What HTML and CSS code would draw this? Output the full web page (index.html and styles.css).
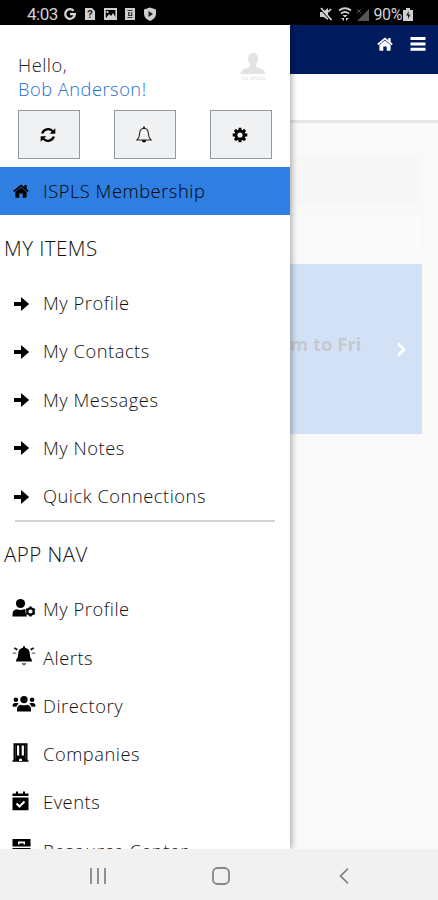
FILE: index.html
```html
<!DOCTYPE html>
<html lang="en">
<head>
<meta charset="utf-8">
<title>ISPLS Membership</title>
<link rel="stylesheet" href="styles.css">
</head>
<body>
<svg class="defs" width="0" height="0">
  <symbol id="home" viewBox="0 0 16 14"><path d="M8 3.4 13.6 8v5.1q0 .7-.7.7H9.7V9.5H6.3v4.3H3.1q-.7 0-.7-.7V8z"/><path d="M.8 7.5 8 1.5l7.200 6" fill="none" stroke="currentColor" stroke-width="1.700"/><path d="M11.300.9h2.300v4.700l-2.300-1.900z"/></symbol>
  <symbol id="arrow" viewBox="0 0 15 14"><path d="M0 5h7V.6q0-.7.6-.2l7 6.100q.5.5 0 1l-7 6.100q-.6.5-.6-.2V9H0z"/></symbol>
</svg>
<div class="phone">
  <header class="status">
    <span class="clock">4:03</span>
    <svg class="status-left" width="96" height="16" viewBox="0 0 96 16">
      <path d="M10.600 4.800A4.800 4.800 0 1 0 11.800 8.200H7" fill="none" stroke="#d8d8d8" stroke-width="2.300"/>
      <path d="M22 2h7l3 3v9H22z"/><text x="24.200" y="12" class="query">?</text>
      <path fill-rule="evenodd" d="M41 2h13v12H41zm1.800 2v8h9.500V4z"/><path d="m43 12 3-4 2 2 2-3 3 5zM43.500 5h2v2h-2z"/>
      <path d="M62 2h10v12H62z"/><path d="M64.500 4.500h5M64.500 11.500h5M68.800 6.300v3.200h-3.200V6.800h1.700" fill="none" stroke="#333" stroke-width="1.200"/>
      <path d="m87 1.500 6 2v4q0 5-6 7.500-6-2.500-6-7.500v-4z"/><path d="M85.500 5v6l4.500-3z" fill="#222"/>
    </svg>
    <svg class="status-right" width="50" height="15" viewBox="0 0 50 15">
      <path d="M1 5h3l5-4v12L4.500 10H1z"/><path d="m1 1 11 12" stroke="#000" stroke-width="2"/><path d="m2 1 10.500 12M9 5l3-3" stroke="#ddd" stroke-width="1.700"/>
      <path d="M20 3.500q6-4.500 12 0M22 6.500q4-3 8 0" fill="none" stroke="#ccc" stroke-width="1.900"/><path d="M23.500 8h5L26 10.500zM22 11h3v3zm8 0h-3v3z"/>
      <path d="M38 14 50 2v12z" fill="#555"/><path d="m38 2 4 4m0-4-4 4" stroke="#555"/>
    </svg>
    <span class="percent">90%</span>
    <svg width="10" height="13" viewBox="0 0 10 13"><path d="M0 2h3V0h4v2h3v11H0z"/><path d="M5.800 3 3 7.500h2V11l2.500-4.500h-2z" fill="#222"/></svg>
  </header>

  <div class="screen">
    <main class="page">
      <div class="topbar">
        <svg width="16" height="14"><use href="#home"/></svg>
        <svg width="16" height="14" viewBox="0 0 16 14"><path d="M.5 0h15v3H.5zm0 5.400h15v3H.5zm0 5.400h15v3H.5z"/></svg>
      </div>
      <div class="subbar"></div>
      <div class="content">
        <div class="ghost dark"></div>
        <div class="ghost light"></div>
        <div class="banner">
          <span>m to Fri</span>
          <svg width="11" height="15" viewBox="0 0 11 15"><path d="m2 1.500 6 6-6 6" fill="none" stroke="#fff" stroke-width="2.800"/></svg>
        </div>
      </div>
    </main>

    <aside class="drawer">
      <div class="user">
        <div class="greeting"><div class="hello">Hello,</div><div class="name">Bob Anderson!</div></div>
        <div class="avatar">
          <svg width="26" height="21" viewBox="0 0 26 21"><path d="M13 0q5 0 5 6 0 3-2 5.500v2q2 1.500 6 2.500 3 1 3.500 5H.5q.5-4 3.500-5 4-1 6-2.500v-2Q8 9 8 6q0-6 5-6z"/></svg>
          <span>no photo</span>
        </div>
      </div>
      <div class="actions">
        <div class="button"><svg width="16" height="16" viewBox="0 0 16 16"><path d="M2.200 6.600A6 5.600 0 0 1 12.600 4.200M13.800 9.400A6 5.600 0 0 1 3.400 11.800" fill="none" stroke="#000" stroke-width="2.300"/><path d="M15.300 1.200v5.600H9.700zM.700 14.800V9.200h5.600z"/></svg></div>
        <div class="button"><svg width="16" height="18" viewBox="0 0 16 18"><path d="M8 2.200q-4 .3-4.300 4.800-.1 4.500-2.700 7h14q-2.600-2.500-2.700-7Q12 2.500 8 2.200z" fill="none" stroke="#222" stroke-width="1.100"/><path d="M7.200.5h1.600v2H7.200zM5.800 14.200h4.400q-.2 2.300-2.200 2.300t-2.200-2.300z"/></svg></div>
        <div class="button"><svg width="16" height="16" viewBox="-8 -8 16 16"><circle r="4.100" fill="none" stroke="#000" stroke-width="3"/><path d="M0-7.300V-4M0 7.300V4M-7.300 0H-4M7.300 0H4M-5.100-5.100-3-3M5.100 5.100 3 3M-5.100 5.100-3 3M5.100-5.100 3-3" stroke="#000" stroke-width="2.900"/></svg></div>
      </div>
      <div class="current"><svg width="16" height="14"><use href="#home"/></svg><span>ISPLS Membership</span></div>

      <h2>MY ITEMS</h2>
      <ul class="items">
        <li><svg width="15" height="14"><use href="#arrow"/></svg><span>My Profile</span></li>
        <li><svg width="15" height="14"><use href="#arrow"/></svg><span>My Contacts</span></li>
        <li><svg width="15" height="14"><use href="#arrow"/></svg><span>My Messages</span></li>
        <li><svg width="15" height="14"><use href="#arrow"/></svg><span>My Notes</span></li>
        <li><svg width="15" height="14"><use href="#arrow"/></svg><span>Quick Connections</span></li>
      </ul>
      <hr>
      <h2 class="nav-title">APP NAV</h2>
      <ul class="nav">
        <li><svg width="24" height="20" viewBox="0 0 24 20"><circle cx="8.500" cy="5.500" r="4.600"/><path d="M.5 18.500v-2q0-5 4.500-5.200 3.500 1.400 7 0l1.700.3q-.7 2.400.3 4.400l1 2.500z"/><circle cx="18.500" cy="13.500" r="3.200" fill="none" stroke="#000" stroke-width="2.200"/><path d="M18.500 8.500v2M18.500 16.500v2M14.200 11l1.700 1M21.100 15l1.700 1M14.200 16l1.700-1M21.100 12l1.700-1" stroke="#000" stroke-width="2.200"/></svg><span>My Profile</span></li>
        <li><svg width="24" height="20" viewBox="0 0 24 20"><path d="M11 .3h2v1.500q4.500.8 4.700 5.200.1 4 1.600 6 .7.900.7 2.500H4q0-1.600.7-2.500 1.500-2 1.600-6Q6.500 2.600 11 1.800z"/><path d="M9.500 17h5q-1 2.500-2.500 2.500T9.500 17z" fill="#777"/><path d="m2.300 2 3.100 1.800M21.700 2l-3.100 1.800" stroke="#000" stroke-width="1.600"/><path d="M.7 7.300h3.600M23.300 7.300h-3.600" stroke="#888" stroke-width="1.500"/></svg><span>Alerts</span></li>
        <li><svg width="24" height="20" viewBox="0 0 24 20"><circle cx="12" cy="5.600" r="3.700"/><circle cx="3.900" cy="5.700" r="2.300"/><circle cx="20.100" cy="5.700" r="2.300"/><path d="M5 17.500v-2.300q0-3.800 4-4.500 3 1 6 0 4 .7 4 4.500v2.300zM.5 12.500Q.500 9 3 9h2.500l1.400.8Q4.800 11 4.400 12.800zM23.500 12.500Q23.500 9 21 9h-2.500l-1.400.8q2.100 1.200 2.500 3z"/></svg><span>Directory</span></li>
        <li><svg width="24" height="20" viewBox="0 0 24 20"><path fill-rule="evenodd" d="M1.500.2h14v17H16.500v1.600H.5v-1.600h1zM5 2.500v10h2.200v-10zm4.700 0v10h2.200v-10zM7 18v-1.500q1.500-2 3 0V18z"/><path d="M3.300 2v14M13.700 2v14" stroke="#666" stroke-width=".6"/></svg><span>Companies</span></li>
        <li><svg width="24" height="20" viewBox="0 0 24 20"><path d="M.5 5V2.500H4V.5h2v2h5v-2h2v2h3.500V5zM.5 6.500h16v12.700H.5z"/><path d="m4.500 12.500 3 3 5-5" fill="none" stroke="#fff" stroke-width="2"/></svg><span>Events</span></li>
        <li><svg width="24" height="20" viewBox="0 0 24 20"><path fill-rule="evenodd" d="M.5 0h18v7.500H.5zm5.500 2.500v3h1.500V4.300h4v1.200H13v-3zM.5 9h18v8H.500z"/></svg><span>Resource Center</span></li>
      </ul>
    </aside>
  </div>

  <footer class="softkeys">
    <svg width="16" height="16" viewBox="0 0 16 16"><path d="M1 0v16M8 0v16M15 0v16"/></svg>
    <svg class="home-key" width="18" height="18" viewBox="0 0 18 18"><rect x="1" y="1" width="16" height="16" rx="4.500"/></svg>
    <svg width="10" height="16" viewBox="0 0 10 16"><path d="M9 .7 1.500 8 9 15.300"/></svg>
  </footer>
</div>
</body>
</html>
```
FILE: styles.css
```css
* { box-sizing: border-box; }
body { margin: 0; font-family: "Open Sans", "Noto Sans", sans-serif; }
svg { display: block; flex: none; }
.defs { position: absolute; }
.phone { width: 438px; height: 900px; display: flex; flex-direction: column; overflow: hidden; }

.status { height: 25px; flex: none; background: #000; color: #d2d2d2; fill: #d0d0d0; display: flex; align-items: center; padding: 3px 25px 0 27px; font: 17px Roboto, sans-serif; }
.clock { width: 36px; letter-spacing: -0.5px; }
.query { font: bold 11px Roboto, sans-serif; fill: #222; }
.status-right { margin-left: auto; }
.percent { font-size: 16px; margin: 0 1px 0 4px; letter-spacing: -0.4px; }

.screen { height: 824px; flex: none; display: grid; grid-template-columns: 290px 148px; overflow: hidden; position: relative; }
.page { grid-column: 2; grid-row: 1; background: #f9f9f9; min-width: 0; }
.topbar { height: 49px; background: #001c5e; color: #fff; fill: #fff; display: flex; justify-content: flex-end; gap: 17px; padding: 12px 12px 0 0; }
.subbar { height: 49px; background: #fff; border-bottom: 3px solid #e6e6e6; }
.content { padding: 34px 16px 0 0; }
.ghost.dark { height: 48px; background: #f7f7f7; margin-bottom: 10px; }
.ghost.light { height: 40px; background: #fafafa; border: 1px solid #f7f7f7; margin-bottom: 9px; }
.banner { height: 170px; background: #d2e1f5; display: flex; align-items: center; padding-right: 15px; justify-content: space-between; color: #c5c9d0; font-size: 18.500px; font-weight: 700; }
.banner span { padding-bottom: 12px; }

.drawer { grid-column: 1; grid-row: 1; height: 824px; overflow: hidden; background: #fff; color: #111; box-shadow: 1px 0 7px rgba(0, 0, 0, 0.38); z-index: 1; font-weight: 330; font-size: 18.300px; letter-spacing: 0.540px; }
.user { height: 85px; display: flex; justify-content: space-between; padding: 28px 23px 0 18px; line-height: 24px; }
.greeting { letter-spacing: 0.500px; }
.hello { color: #222; }
.name { color: #1f6fd4; }
.avatar { width: 27px; fill: #e3e3e3; color: #ccc; font-size: 6px; line-height: 8px; text-align: center; white-space: nowrap; letter-spacing: 0; }
.actions { display: flex; justify-content: space-between; padding: 0 18px; height: 57px; }
.button { width: 62px; height: 49px; background: #f0f1f2; border: 1px solid #949b9f; display: flex; align-items: center; justify-content: center; }
.button svg { margin-right: 2px; }
.current { height: 48px; background: #2f7fe3; color: #000; display: flex; align-items: center; padding-left: 13px; }
.current span { margin-left: 14px; padding-bottom: 2px; }
h2 { margin: 0; height: 64px; padding: 20px 0 0 4px; font-size: 20.500px; line-height: 26px; font-weight: 330; letter-spacing: 0.450px; }
ul { list-style: none; margin: 0; padding: 0; }
li { height: 48.250px; display: flex; align-items: center; padding-left: 14px; white-space: nowrap; }
li span { margin-left: 14px; padding-bottom: 1.200px; }
.items svg { margin-top: 1px; }
hr { border: 0; height: 2px; background: #d2d2d2; margin: 0 15px; }
.nav-title { height: 63px; padding-top: 19px; }
.nav li { padding-left: 12px; }
.nav li svg { margin-bottom: 3px; }
.nav li span { margin-left: 7px; }

.softkeys { height: 51px; background: #f1f1f1; display: flex; align-items: center; justify-content: space-between; padding: 2px 89px 0 90px; fill: none; stroke: #858585; stroke-width: 1.800px; }
.home-key { margin-right: 4px; }
```
